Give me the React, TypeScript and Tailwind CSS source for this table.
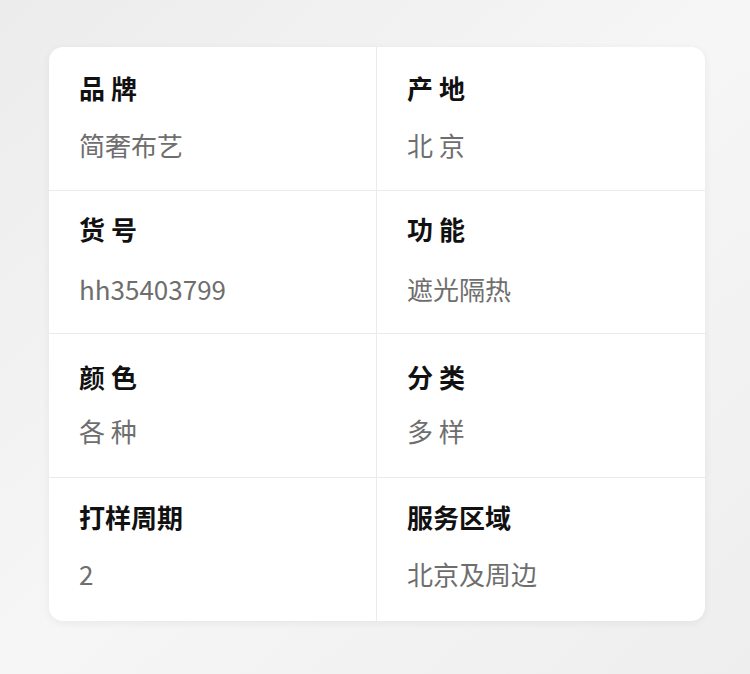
const specs = [
  { label: "品 牌", value: "简奢布艺" },
  { label: "产 地", value: "北 京" },
  { label: "货 号", value: "hh35403799" },
  { label: "功 能", value: "遮光隔热" },
  { label: "颜 色", value: "各 种" },
  { label: "分 类", value: "多 样" },
  { label: "打样周期", value: "2" },
  { label: "服务区域", value: "北京及周边" },
];

// small per-row offsets as seen in the reference
const rowPad = ["pt-[25px]", "pt-[22px]", "pt-[27px]", "pt-[23px]"];
const rowGap = ["mt-[25px]", "mt-[28px]", "mt-[22px]", "mt-[25px]"];

export default function App() {
  return (
    <div className="h-[674px] w-[750px] bg-gradient-to-br from-[#ececec] via-[#f6f6f6] to-[#eeeeee] pt-[47px] pl-[49px] font-['Noto_Sans_CJK_SC','Noto_Sans',sans-serif]">
      <div className="grid w-[656px] grid-cols-2 overflow-hidden rounded-[14px] bg-white shadow-[0_2px_8px_rgba(0,0,0,0.06)]">
        {specs.map((item, i) => {
          const row = Math.floor(i / 2);
          return (
            <div
              key={item.label}
              className={`flex h-[143.5px] flex-col pl-[30px] ${rowPad[row]} ${
                i % 2 === 0 ? "border-r border-[#ebebeb]" : ""
              } ${i < 6 ? "border-b border-[#ebebeb]" : ""}`}
            >
              <div className="text-[26px] leading-[32px] font-bold text-[#111]">
                {item.label}
              </div>
              <div
                className={`${rowGap[row]} text-[26px] leading-[32px] text-[#6e6e6e]`}
              >
                {item.value}
              </div>
            </div>
          );
        })}
      </div>
    </div>
  );
}
